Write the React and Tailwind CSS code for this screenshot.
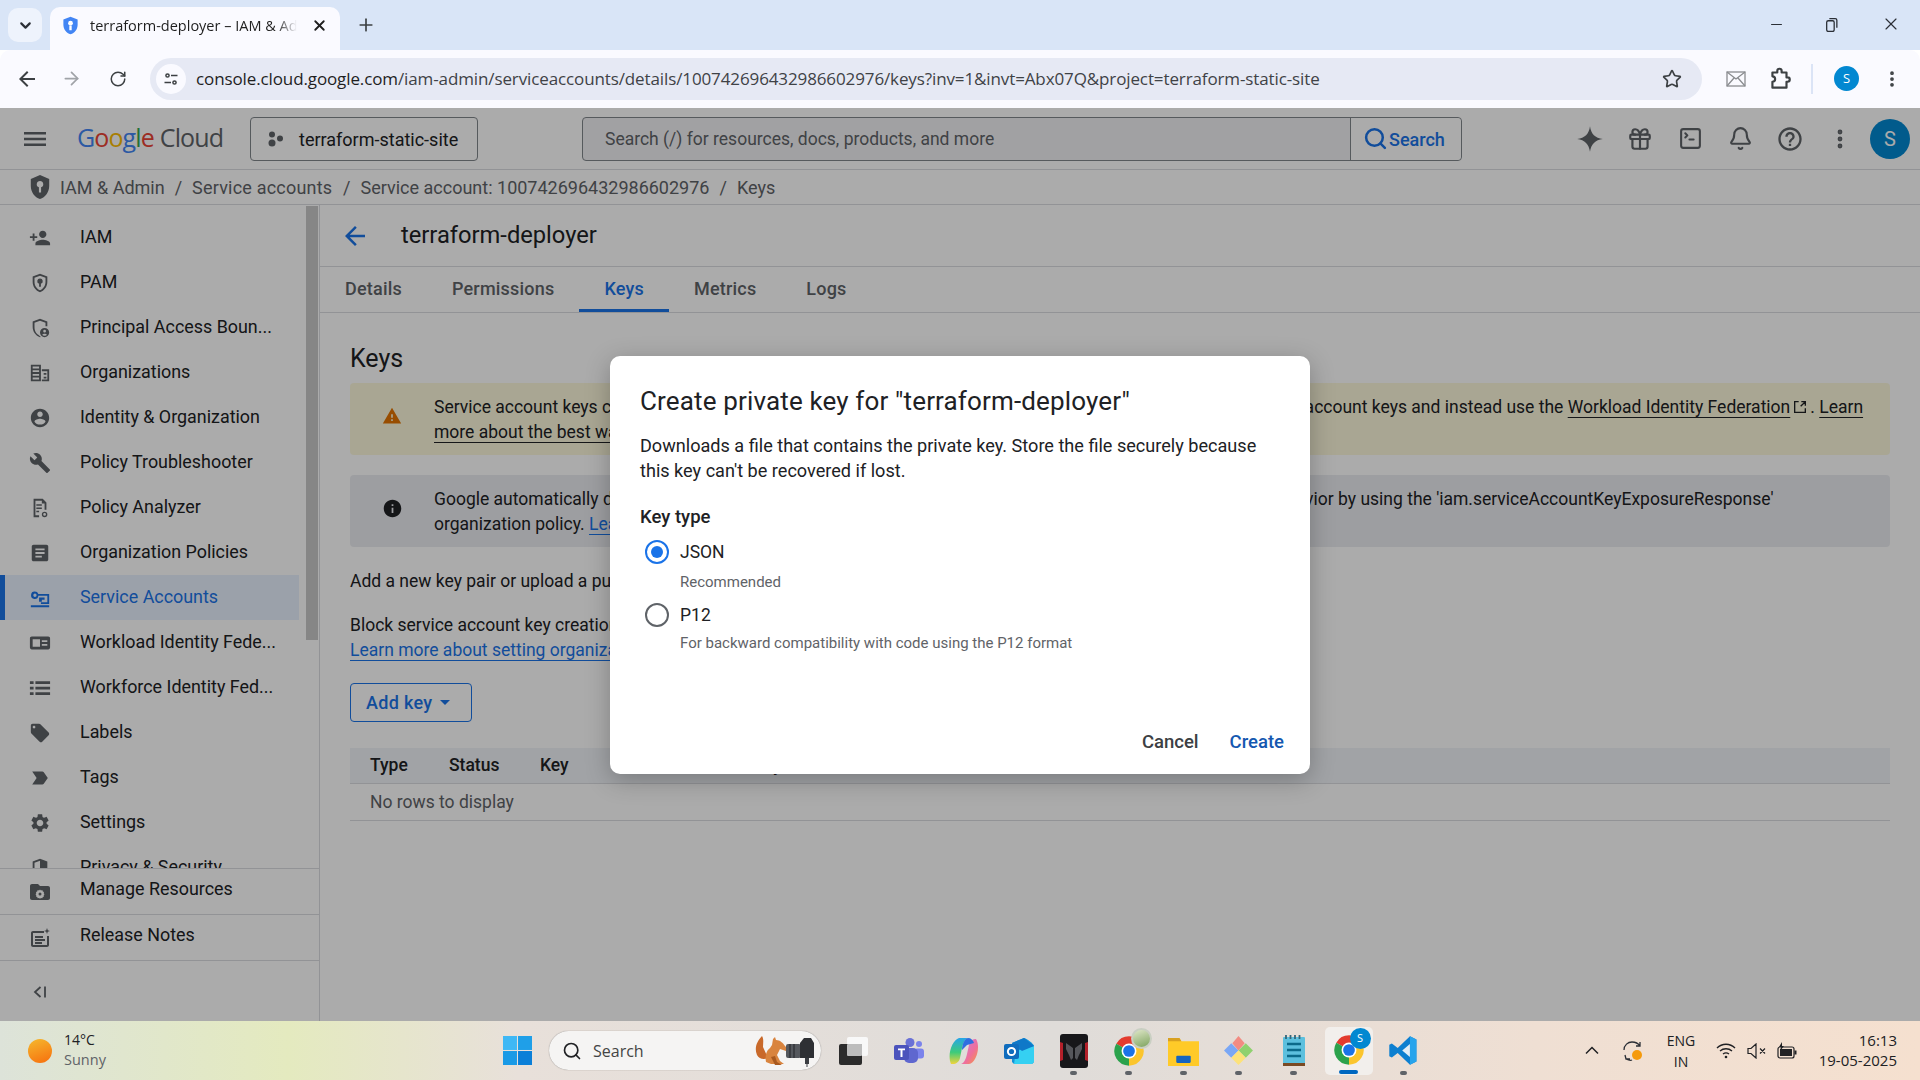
import { ArrowRight, RotateCw, Star, Minus, X, Plus, ChevronDown, EllipsisVertical, Search, SquareTerminal, Gift, Bell } from 'lucide-react';

// ─── Material icon paths ──────────────────────────────────────────────────────
const P = {
  personAdd: 'M15 12c2.21 0 4-1.79 4-4s-1.79-4-4-4-4 1.79-4 4 1.79 4 4 4zm-9-2V7H4v3H1v2h3v3h2v-3h3v-2H6zm9 4c-2.67 0-8 1.34-8 4v2h16v-2c0-2.66-5.33-4-8-4z',
  shieldKey: 'M12 2 4 5v6c0 5 3.4 9.7 8 11 4.6-1.3 8-6 8-11V5l-8-3zm6 9c0 4-2.6 7.8-6 8.9C8.600 18.800 6 15 6 11V6.400l6-2.200 6 2.200V11zM12 7a3 3 0 0 0-1 5.830V16h2v-3.170A3 3 0 0 0 12 7z',
  shieldPerson: 'M12 2 4 5v6c0 5 3.400 9.700 8 11l1-.3c-1-.6-1.800-1.300-2.400-2.200C7.900 18.900 6 15.100 6 11V6.400l6-2.200 6 2.200V10h2V5l-8-3zm5 10a5 5 0 1 0 0 10 5 5 0 0 0 0-10zm0 2a1.500 1.500 0 1 1 0 3 1.500 1.500 0 0 1 0-3zm0 6.500c-1 0-2-.5-2.500-1.200.5-.7 1.600-1 2.500-1s2 .3 2.500 1c-.5.700-1.500 1.200-2.500 1.200z',
  domain: 'M2 3h11v18H2V3zm2 2v2h7V5H4zm0 4v2h7V9H4zm0 4v2h7v-2H4zm0 4v2h7v-2H4zM14 8h8v13h-8v-2h6V10h-6V8zm2 4h3v2h-3v-2zm0 4h3v2h-3v-2z',
  account: 'M12 2C6.480 2 2 6.480 2 12s4.480 10 10 10 10-4.480 10-10S17.520 2 12 2zm0 3c1.660 0 3 1.340 3 3s-1.340 3-3 3-3-1.340-3-3 1.340-3 3-3zm0 14.200c-2.500 0-4.710-1.280-6-3.220.030-1.990 4-3.080 6-3.080 1.990 0 5.970 1.090 6 3.080-1.290 1.940-3.500 3.220-6 3.220z',
  build: 'M22.700 19l-9.100-9.100c.9-2.300.4-5-1.500-6.900-2-2-5-2.400-7.400-1.300L9 6 6 9 1.600 4.700C.4 7.100.9 10.100 2.900 12.100c1.900 1.900 4.600 2.400 6.900 1.500l9.100 9.100c.4.4 1 .4 1.400 0l2.300-2.300c.5-.4.5-1.100.1-1.400z',
  analyzer: 'M5 2h10l4 4v8h-2V7h-3V4H7v16h4v2H5V2zm3 6h6v1.500H8V8zm0 3.500h6V13H8v-1.500zm0 3.500h3v1.500H8V15zm9 1a3 3 0 1 0 0 6 3 3 0 0 0 0-6zm0 1.500a1.500 1.500 0 1 1 0 3 1.500 1.500 0 0 1 0-3z',
  article: 'M19 3H5c-1.100 0-2 .9-2 2v14c0 1.100.9 2 2 2h14c1.100 0 2-.9 2-2V5c0-1.100-.9-2-2-2zm-5 14H7v-2h7v2zm3-4H7v-2h10v2zm0-4H7V7h10v2z',
  serviceAcct: 'M2 20h20v2H2v-2zM6.500 5a4 4 0 0 1 3.700 2.500H22v11h-9v-2h7V9.500h-9.800A4 4 0 1 1 6.500 5zm0 2.200a1.800 1.800 0 1 0 0 3.600 1.800 1.800 0 0 0 0-3.600zM11 11.500h6V14h-3v2h-3v-4.500z',
  workload: 'M21 5H3c-1.100 0-2 .9-2 2v10c0 1.100.9 2 2 2h18c1.100 0 2-.9 2-2V7c0-1.100-.9-2-2-2zM4 8h8v8H4V8zm10 1h6v2h-6V9zm0 4h6v2h-6v-2z',
  list: 'M1 13.500h4v-3H1v3zm0 6h4v-3H1v3zm0-12h4v-3H1v3zm6 6h16v-3H7v3zm0 6h16v-3H7v3zm0-15v3h16v-3H7z',
  offer: 'M21.410 11.580l-9-9C12.050 2.220 11.550 2 11 2H4c-1.100 0-2 .9-2 2v7c0 .55.22 1.050.59 1.420l9 9c.36.36.86.58 1.410.58.55 0 1.050-.22 1.410-.59l7-7c.37-.36.59-.86.59-1.410 0-.55-.23-1.060-.59-1.420zM5.500 7C4.670 7 4 6.330 4 5.500S4.670 4 5.500 4 7 4.670 7 5.500 6.330 7 5.500 7z',
  tag: 'M3.500 18.990l11 .01c.67 0 1.270-.33 1.630-.84L20.500 12l-4.370-6.160c-.36-.51-.96-.84-1.630-.84l-11 .01L8.340 12 3.500 18.990z',
  settings: 'M19.140 12.940c.04-.3.06-.61.06-.94 0-.32-.02-.64-.07-.94l2.030-1.580c.18-.14.23-.41.12-.61l-1.920-3.320c-.12-.22-.37-.29-.59-.22l-2.390.96c-.5-.38-1.030-.7-1.620-.94l-.36-2.540c-.04-.24-.24-.41-.48-.41h-3.840c-.24 0-.43.17-.47.41l-.36 2.540c-.59.24-1.130.57-1.620.94l-2.390-.96c-.22-.08-.47 0-.59.22L2.740 8.870c-.12.21-.08.47.12.61l2.030 1.580c-.05.3-.09.63-.09.94s.02.64.07.94l-2.030 1.580c-.18.14-.23.41-.12.61l1.920 3.320c.12.22.37.29.59.22l2.390-.96c.5.38 1.030.7 1.620.94l.36 2.540c.05.24.24.41.48.41h3.840c.24 0 .44-.17.47-.41l.36-2.540c.59-.24 1.130-.56 1.620-.94l2.390.96c.22.08.47 0 .59-.22l1.920-3.320c.12-.22.07-.47-.12-.61l-2.010-1.580zM12 15.600c-1.980 0-3.600-1.620-3.600-3.600s1.620-3.600 3.600-3.600 3.600 1.620 3.600 3.600-1.620 3.600-3.600 3.600z',
  shieldLock: 'M12 2 4 5v6c0 5 3.400 9.700 8 11 4.600-1.300 8-6 8-11V5l-8-3zm0 2.200V20c-3.400-1.100-6-4.900-6-9V6.400l6-2.200z',
  folderGear: 'M20 6h-8l-2-2H4c-1.100 0-2 .9-2 2v12c0 1.100.9 2 2 2h16c1.100 0 2-.9 2-2V8c0-1.100-.9-2-2-2zm-8 3.500l1 .9 1.300-.3.5 1.300 1.200.5-.3 1.300.8 1-.8 1 .3 1.300-1.200.5-.5 1.200-1.300-.3-1 .9-1-.9-1.300.3-.5-1.200-1.200-.5.3-1.300-.8-1 .8-1-.3-1.300 1.200-.5.5-1.300 1.300.3 1-.9zm0 3a1.500 1.500 0 1 0 0 3 1.500 1.500 0 0 0 0-3z',
  notes: 'M5 5h11v2H5v12h14V10h2v9c0 1.100-.9 2-2 2H5c-1.100 0-2-.9-2-2V7c0-1.100.9-2 2-2zm2 5h8v2H7v-2zm0 3h10v2H7v-2zm0 3h7v2H7v-2zM19 2l.8 2.200L22 5l-2.200.8L19 8l-.8-2.200L16 5l2.200-.8L19 2z',
  warning: 'M1 21h22L12 2 1 21zm12-3h-2v-2h2v2zm0-4h-2v-4h2v4z',
  info: 'M12 2C6.480 2 2 6.480 2 12s4.480 10 10 10 10-4.480 10-10S17.520 2 12 2zm1 15h-2v-6h2v6zm0-8h-2V7h2v2z',
  help: 'M11 18h2v-2h-2v2zm1-16C6.480 2 2 6.480 2 12s4.480 10 10 10 10-4.480 10-10S17.520 2 12 2zm0 18c-4.410 0-8-3.590-8-8s3.590-8 8-8 8 3.590 8 8-3.590 8-8 8zm0-14c-2.210 0-4 1.790-4 4h2c0-1.100.9-2 2-2s2 .9 2 2c0 2-3 1.750-3 5h2c0-2.250 3-2.500 3-5 0-2.210-1.790-4-4-4z',
  spark: 'M12 1c.8 6.500 4.500 10.200 11 11-6.500.8-10.200 4.500-11 11-.8-6.500-4.500-10.200-11-11 6.500-.8 10.200-4.500 11-11z',
  arrowBack: 'M20 11H7.830l5.590-5.590L12 4l-8 8 8 8 1.410-1.410L7.830 13H20v-2z',
};

const Mi = ({ d, className }) => (
  <svg viewBox="0 0 24 24" fill="currentColor" className={className}>
    <path d={d} />
  </svg>
);

const NAV = [
  ['IAM', P.personAdd],
  ['PAM', P.shieldKey],
  ['Principal Access Boun...', P.shieldPerson],
  ['Organizations', P.domain],
  ['Identity & Organization', P.account],
  ['Policy Troubleshooter', P.build],
  ['Policy Analyzer', P.analyzer],
  ['Organization Policies', P.article],
  ['Service Accounts', P.serviceAcct, true],
  ['Workload Identity Fede...', P.workload],
  ['Workforce Identity Fed...', P.list],
  ['Labels', P.offer],
  ['Tags', P.tag],
  ['Settings', P.settings],
  ['Privacy & Security', P.shieldLock],
];

// ─── Taskbar drawings ─────────────────────────────────────────────────────────
const ChromeLogo = ({ className }) => (
  <svg viewBox="0 0 24 24" className={className}>
    <path d="M2.470 6.500A11 11 0 0 1 21.530 6.500L12 12Z" fill="#e33b2e" />
    <path d="M21.530 6.500A11 11 0 0 1 12 23L12 12Z" fill="#fbc52d" />
    <path d="M12 23A11 11 0 0 1 2.470 6.500L12 12Z" fill="#2ba24c" />
    <circle cx="12" cy="12" r="5.600" fill="#fff" />
    <circle cx="12" cy="12" r="4.400" fill="#1a73e8" />
  </svg>
);

const Dot = ({ on }) => <span className={`h-[4px] w-[7px] rounded-full ${on ? 'bg-[#5f6368]' : 'bg-transparent'}`} />;

const TaskSlot = ({ children, running }) => (
  <div className="flex h-[48px] w-[55px] flex-col items-center justify-end gap-[4px]">
    <div className="flex h-[32px] items-center justify-center">{children}</div>
    <Dot on={running} />
  </div>
);

const Tab = ({ children, active }) => (
  <div className={`flex h-[45px] items-center px-[25px] text-[18px] font-medium tracking-[0.200px] ${active ? 'border-b-[3px] border-[#1a73e8] pt-[1px] text-[#1a73e8]' : 'pb-[2px] text-[#5f6368]'}`}>
    {children}
  </div>
);

export default function App() {
  return (
    <div className="flex h-[1080px] w-[1920px] flex-col overflow-hidden bg-white font-['Roboto',sans-serif] text-[17.500px] text-[#202124]">
      {/* Browser tab strip */}
      <div className="flex h-[50px] shrink-0 items-end bg-[#d9e5f7] font-['Open_Sans',sans-serif]">
        <div className="mb-[8px] ml-[8px] flex h-[34px] w-[34px] items-center justify-center rounded-[10px] bg-[#eef3fc]">
          <ChevronDown size={17} strokeWidth={3} className="text-[#2b2f36]" />
        </div>
        <div className="ml-[8px] flex h-[43px] w-[290px] items-center rounded-t-[10px] bg-[#fafaff] pb-[6px] pl-[11px]">
          <svg viewBox="0 0 24 24" className="h-[19px] w-[19px]">
            <path d="M12 1 3 4.500V11c0 5.500 3.800 10.600 9 12 5.200-1.400 9-6.500 9-12V4.500L12 1z" fill="#4285f4" />
            <circle cx="12" cy="9" r="3" fill="#fff" />
            <path d="M12 12v6" stroke="#fff" strokeWidth="3" />
          </svg>
          <span className="ml-[10px] w-[207px] overflow-hidden whitespace-nowrap text-[14.500px] text-[#1f1f1f] [mask-image:linear-gradient(90deg,#000_90%,transparent)]">
            terraform-deployer – IAM & Admin
          </span>
          <X size={17} strokeWidth={2.600} className="ml-[14px] text-[#1f1f1f]" />
        </div>
        <Plus size={20} strokeWidth={2} className="mb-[15px] ml-[16px] text-[#3c4043]" />
        <div className="mb-[16px] ml-auto flex items-center text-[#2b2f36]">
          <Minus size={17} strokeWidth={1.600} className="mr-[39px]" />
          <svg viewBox="0 0 14 14" className="mr-[42px] h-[15px] w-[15px]" fill="none" stroke="currentColor" strokeWidth="1.200">
            <rect x="2.500" y="3.500" width="7" height="10" rx="1.500" />
            <path d="M5 1.500h5.500a1.500 1.500 0 0 1 1.500 1.500v7" />
          </svg>
          <X size={20} strokeWidth={1.400} className="mr-[19px]" />
        </div>
      </div>

      {/* Browser toolbar */}
      <div className="flex h-[58px] shrink-0 items-center rounded-t-[10px] bg-[#fafaff] pb-[1px] font-['Open_Sans',sans-serif] text-[#444746]">
        <Mi d={P.arrowBack} className="ml-[15px] h-[24px] w-[24px] text-[#3c4043]" />
        <ArrowRight size={21} className="ml-[22px] text-[#a0a3a8]" />
        <RotateCw size={18} className="ml-[27px] text-[#3c4043]" />
        <div className="ml-[23px] flex h-[42px] w-[1552px] items-center rounded-full bg-[#e6e9f4] pl-[6px]">
          <div className="flex h-[30px] w-[30px] items-center justify-center rounded-full bg-[#fafaff]">
            <svg viewBox="0 0 16 16" fill="none" stroke="#3c4043" strokeWidth="1.500" className="h-[16px] w-[16px]">
              <circle cx="4.500" cy="4.500" r="1.600" />
              <path d="M8 4.500h6.500M1.500 11.500H8" />
              <circle cx="11.500" cy="11.500" r="1.600" />
            </svg>
          </div>
          <span className="ml-[10px] whitespace-nowrap text-[17px] tracking-[-0.115px] text-[#1f1f1f]">
            console.cloud.google.com<span className="text-[#3f4246]">/iam-admin/serviceaccounts/details/100742696432986602976/keys?inv=1&invt=Abx07Q&project=terraform-static-site</span>
          </span>
          <Star size={20} strokeWidth={2} className="ml-auto mr-[20px] text-[#3c4043]" />
        </div>
        <svg viewBox="0 0 20 16" fill="none" stroke="#8a8c90" strokeWidth="1.300" className="ml-[24px] h-[16px] w-[20px]">
          <rect x="1" y="1" width="18" height="14" />
          <path d="M1 1l9 7 9-7M1 15l7-8M19 15l-7-8" />
        </svg>
        <svg viewBox="0 0 24 24" fill="none" stroke="#3c4043" strokeWidth="2" className="ml-[21px] h-[26px] w-[26px]">
          <path d="M5 6h4.500V4.500a2 2 0 0 1 4 0V6H18v4.500h1a2 2 0 0 1 0 4h-1V20H5v-5.500a2.500 2.500 0 0 0 0-5V6z" strokeLinejoin="round" />
        </svg>
        <div className="ml-[18px] h-[30px] w-[2px] bg-[#dbe4f6]" />
        <div className="ml-[21px] flex h-[25px] w-[25px] items-center justify-center rounded-full bg-[#0288d1] text-[13px] text-white">S</div>
        <EllipsisVertical size={20} strokeWidth={2.500} className="ml-[23px] text-[#3c4043]" />
      </div>

      {/* Cloud console */}
      <div className="relative flex min-h-0 flex-1 flex-col">
        {/* Console header */}
        <div className="flex h-[62px] shrink-0 items-center border-b border-[#dadce0] pl-[23px] text-[18px] text-[#5f6368]">
          <svg viewBox="0 0 24 24" fill="currentColor" className="h-[24px] w-[24px]">
            <path d="M1 5h22v2.400H1zM1 10.800h22v2.400H1zM1 16.600h22V19H1z" />
          </svg>
          <span className="ml-[30px] w-[173px] whitespace-nowrap pb-[2px] font-['Open_Sans',sans-serif] text-[25px] tracking-[-0.900px]">
            <span className="text-[#4285f4]">G</span>
            <span className="text-[#ea4335]">o</span>
            <span className="text-[#fbbc04]">o</span>
            <span className="text-[#4285f4]">g</span>
            <span className="text-[#34a853]">l</span>
            <span className="text-[#ea4335]">e</span>
            <span className="ml-[6px]">Cloud</span>
          </span>
          <div className="flex h-[44px] w-[228px] items-center rounded-[4px] border border-[#80868b] pl-[17px] text-[#202124]">
            <svg viewBox="0 0 16 16" fill="#5f6368" className="h-[16px] w-[16px]">
              <circle cx="4" cy="3.500" r="3" />
              <circle cx="12" cy="7.500" r="3" />
              <circle cx="4" cy="12" r="3.500" />
            </svg>
            <span className="ml-[15px] whitespace-nowrap pt-[2px]">terraform-static-site</span>
          </div>
          <div className="ml-[104px] flex h-[44px] w-[880px] items-center rounded-[4px] border border-[#80868b] bg-[#f1f1f3]">
            <span className="flex-1 pl-[22px] pt-[2px] text-[17.500px] text-[#5f6368]">Search (/) for resources, docs, products, and more</span>
            <div className="flex h-full w-[111px] items-center gap-[1px] rounded-r-[4px] border-l border-[#80868b] bg-white pl-[12px] font-medium text-[#1a73e8]">
              <Search size={25} strokeWidth={2.400} />
              <span className="pt-[1px]">Search</span>
            </div>
          </div>
          <Mi d={P.spark} className="ml-[114px] h-[28px] w-[28px]" />
          <Gift size={26} strokeWidth={2} className="ml-[23px]" />
          <SquareTerminal size={25} strokeWidth={2} className="ml-[25px]" />
          <Bell size={25} strokeWidth={2} className="ml-[25px]" />
          <Mi d={P.help} className="ml-[23px] h-[28px] w-[28px]" />
          <EllipsisVertical size={24} strokeWidth={2.800} className="ml-[24px]" />
          <div className="ml-[18px] flex h-[40px] w-[40px] items-center justify-center rounded-full bg-[#0288d1] text-[20px] text-white">S</div>
        </div>

        {/* Breadcrumbs */}
        <div className="flex h-[35px] shrink-0 items-center border-b border-[#dadce0] pl-[27px] text-[18px] text-[#5f6368]">
          <Mi d="M12 1 3.500 4.500V11c0 5.500 3.600 10.600 8.500 12 4.900-1.400 8.500-6.500 8.500-12V4.500L12 1zm0 5.500a3 3 0 0 1 1 5.830V17h-2v-4.670A3 3 0 0 1 12 6.500z" className="h-[26px] w-[26px]" />
          <span className="ml-[7px]">IAM & Admin</span>
          <span className="mx-[10px]">/</span>
          <span className="w-[141px] whitespace-nowrap tracking-[0.200px]">Service accounts</span>
          <span className="mx-[10px]">/</span>
          <span>Service account: 100742696432986602976</span>
          <span className="mx-[10px]">/</span>
          <span>Keys</span>
        </div>

        <div className="flex min-h-0 flex-1">
          {/* Sidebar */}
          <div className="flex w-[320px] shrink-0 flex-col border-r border-[#dadce0] text-[17.900px]">
            <div className="flex h-[663px] min-h-0">
              <div className="w-[299px] overflow-hidden pt-[10px]">
                {NAV.map(([label, d, active]) => (
                  <div
                    key={label}
                    className={`flex h-[45px] items-center whitespace-nowrap ${active ? 'border-l-[5px] border-[#1a73e8] bg-[#e8f0fe] pl-[24px] text-[#1a73e8]' : 'pl-[29px]'}`}
                  >
                    <Mi d={d} className={`h-[22px] w-[22px] ${active ? 'text-[#1a73e8]' : 'text-[#5f6368]'}`} />
                    <span className="ml-[29px]">{label}</span>
                  </div>
                ))}
              </div>
              <div className="ml-[7px] mt-[1px] h-[434px] w-[12px] bg-[#c8c8c8]" />
            </div>
            <div className="flex h-[46px] items-center border-t border-[#dadce0] pl-[28px]">
              <Mi d={P.folderGear} className="h-[24px] w-[24px] text-[#5f6368]" />
              <span className="ml-[28px] pb-[4px]">Manage Resources</span>
            </div>
            <div className="flex h-[46px] items-center border-t border-[#dadce0] pl-[28px]">
              <Mi d={P.notes} className="h-[24px] w-[24px] text-[#5f6368]" />
              <span className="ml-[28px] pb-[4px]">Release Notes</span>
            </div>
            <div className="flex flex-1 items-center border-t border-[#dadce0] pl-[33px] pt-[2px] text-[#5f6368]">
              <svg viewBox="0 0 14 14" fill="none" stroke="currentColor" strokeWidth="1.800" className="h-[14px] w-[14px]">
                <path d="M7.500 2 2 7l5.500 5M12 1.500v11" />
              </svg>
            </div>
          </div>

          {/* Page */}
          <div className="min-w-0 flex-1">
            <div className="flex h-[62px] items-center border-b border-[#dadce0] pl-[20px]">
              <Mi d={P.arrowBack} className="h-[30px] w-[30px] text-[#1a73e8]" />
              <span className="ml-[31px] text-[23.700px]">terraform-deployer</span>
            </div>
            <div className="flex h-[46px] border-b border-[#dadce0]">
              <Tab>Details</Tab>
              <Tab>Permissions</Tab>
              <Tab active>Keys</Tab>
              <Tab>Metrics</Tab>
              <Tab>Logs</Tab>
            </div>
            <div className="pl-[30px] pr-[30px]">
              <h1 className="mt-[31px] text-[25px] leading-[30px]">Keys</h1>
              <div className="mt-[9px] flex h-[72px] rounded-[4px] bg-[#fcf8dc]">
                <div className="flex w-[84px] shrink-0 items-center justify-center pb-[6px]">
                  <Mi d={P.warning} className="h-[20px] w-[20px] text-[#e37400]" />
                </div>
                <p className="py-[12px] pr-[24px] leading-[25px]">
                  Service account keys could pose a security risk if compromised. We recommend you avoid downloading service account keys and instead use the{' '}
                  <span className="underline underline-offset-4">Workload Identity Federation</span>
                  <svg viewBox="0 0 24 24" fill="none" stroke="currentColor" strokeWidth="2" className="mx-[2px] inline h-[16px] w-[16px] align-[-2px]">
                    <path d="M20 14v6H4V4h6M13 11l7-7M14 4h6v6" />
                  </svg>
                  . <span className="underline underline-offset-4">Learn more about the best way to authenticate service accounts on Google Cloud</span>.
                </p>
              </div>
              <div className="mt-[20px] flex h-[72px] rounded-[4px] bg-[#ebecf1]">
                <div className="flex w-[84px] shrink-0 items-center justify-center pb-[6px]">
                  <Mi d={P.info} className="h-[21px] w-[21px]" />
                </div>
                <p className="py-[12px] pr-[24px] leading-[25px]">
                  Google automatically disables service account keys detected in public repositories. You can customize this behavior by using the 'iam.serviceAccountKeyExposureResponse' organization policy.{' '}
                  <span className="text-[#1a73e8] underline underline-offset-4">Learn more</span>
                </p>
              </div>
              <p className="mt-[22px] leading-[25px]">Add a new key pair or upload a public key certificate from an existing key pair.</p>
              <p className="mt-[19px] leading-[25px]">Block service account key creation using organization policies.</p>
              <p className="leading-[25px] text-[#1a73e8] underline underline-offset-4">Learn more about setting organization policies for service accounts</p>
              <div className="mt-[20px] flex h-[39px] w-[122px] items-center rounded-[4px] border border-[#1a73e8] pl-[15px] text-[18px] font-medium tracking-[0.300px] text-[#1a73e8]">
                Add key
                <span className="ml-[8px] h-0 w-0 border-x-[5px] border-t-[5px] border-x-transparent border-t-[#1a73e8]" />
              </div>
              <div className="mt-[26px] flex h-[36px] items-center border-b border-[#dadce0] bg-[#f1f4f8] pl-[20px] font-medium">
                <span className="w-[79px]">Type</span>
                <span className="w-[91px]">Status</span>
                <span className="w-[213px]">Key</span>
                <span>Key creation date</span>
              </div>
              <div className="flex h-[37px] items-center border-b border-[#dadce0] pl-[20px] text-[#5f6368]">No rows to display</div>
            </div>
          </div>
        </div>

        {/* Scrim and dialog */}
        <div className="absolute inset-0 flex items-center justify-center bg-black/[0.33]">
          <div className="flex h-[418px] w-[700px] flex-col rounded-[10px] bg-white pl-[30px] pt-[30px] shadow-[0_6px_24px_rgba(0,0,0,0.25)]">
            <h2 className="whitespace-nowrap text-[26px] leading-[30px] tracking-[0.150px]">Create private key for "terraform-deployer"</h2>
            <p className="mt-[17px] w-[630px] text-[18.100px] leading-[25px]">
              Downloads a file that contains the private key. Store the file securely because this key can't be recovered if lost.
            </p>
            <div className="mt-[22px] text-[18.500px] font-medium leading-[25px]">Key type</div>
            <div className="ml-[5px] mt-[9px] flex h-[26px] items-center">
              <span className="flex h-[24px] w-[24px] items-center justify-center rounded-full border-2 border-[#1a73e8]">
                <span className="h-[12px] w-[12px] rounded-full bg-[#1a73e8]" />
              </span>
              <span className="ml-[11px] pt-[2px]">JSON</span>
            </div>
            <div className="ml-[40px] mt-[7px] text-[15px] leading-[20px] text-[#5f6368]">Recommended</div>
            <div className="ml-[5px] mt-[10px] flex h-[26px] items-center">
              <span className="h-[24px] w-[24px] rounded-full border-2 border-[#5f6368]" />
              <span className="ml-[11px] pt-[2px]">P12</span>
            </div>
            <div className="ml-[40px] mt-[5px] text-[15px] leading-[20px] text-[#5f6368]">For backward compatibility with code using the P12 format</div>
            <div className="mt-auto flex justify-end gap-[31px] pb-[19px] pr-[26px] text-[18.500px] font-medium leading-[25px]">
              <span className="text-[#3c4043]">Cancel</span>
              <span className="text-[#1558b0]">Create</span>
            </div>
          </div>
        </div>
      </div>

      {/* Windows taskbar */}
      <div className="flex h-[59px] shrink-0 items-center bg-[linear-gradient(90deg,#dde3d9_0%,#e4eabf_15%,#e8e0da_27%,#dfdcd9_55%,#efdfd3_80%,#f5e0cf_100%)] font-['Open_Sans',sans-serif]">
        <div className="ml-[28px] h-[24px] w-[24px] rounded-full bg-[linear-gradient(160deg,#f5b92e,#f76e0d)]" />
        <div className="ml-[12px] w-[439px] pb-[2px] text-[14px] leading-[20px]">
          <div className="text-[#202124]">14°C</div>
          <div className="text-[14.500px] text-[#5f6368]">Sunny</div>
        </div>
        <svg viewBox="0 0 28 28" className="h-[29px] w-[29px]">
          <rect x="0" y="0" width="13.500" height="13.500" fill="#3fb8f5" />
          <rect x="14.500" y="0" width="13.500" height="13.500" fill="#1f9fe8" />
          <rect x="0" y="14.500" width="13.500" height="13.500" fill="#1a9ae6" />
          <rect x="14.500" y="14.500" width="13.500" height="13.500" fill="#0b7fd8" />
        </svg>
        <div className="ml-[17px] flex h-[39px] w-[272px] items-center rounded-full bg-[#f5f4f3] pl-[13px] shadow-[0_0_1px_rgba(0,0,0,0.5)]">
          <Search size={20} strokeWidth={2} className="text-[#202124]" />
          <span className="ml-[11px] text-[16px] text-[#444]">Search</span>
          <svg viewBox="0 0 62 32" className="ml-auto mr-[5px] h-[32px] w-[62px]">
            <path d="M8 1c-5 5-8 12-5 19 2 4 7 5 11 3L9 12c0-4 1-8-1-11z" fill="#c9692a" />
            <path d="M19 4l2-2 1 3c4 0 7 3 9 6l3 3-2 2-6-2-3 6 3 6 4 3H17l-5-2c-1-6 0-11 4-14l2-3z" fill="#d9843e" />
            <path d="M17 22l4 8h7l-5-3-2-6z" fill="#a8591f" />
            <rect x="32" y="9" width="15" height="14" rx="2" fill="#55585d" />
            <path d="M36 9v14M40 9v14" stroke="#2a2c30" strokeWidth="1.200" />
            <path d="M46 8l4-5h7l3 5v15H46z" fill="#2e3034" />
            <rect x="51" y="23" width="4" height="6" fill="#3a3d42" />
            <path d="M53 29v3" stroke="#7a7d80" strokeWidth="1.500" />
          </svg>
        </div>
        <div className="ml-[5px] flex items-center">
          <TaskSlot>
            <svg viewBox="0 0 29 28" className="h-[28px] w-[29px]">
              <rect x="8" y="0" width="21" height="19" rx="2" fill="#f8f8f8" />
              <rect x="0" y="7" width="23" height="21" rx="2" fill="#2b2b2b" />
              <rect x="8" y="7" width="15" height="12" rx="1" fill="#bcbcbc" />
            </svg>
          </TaskSlot>
          <TaskSlot>
            <svg viewBox="0 0 30 26" className="h-[26px] w-[30px]">
              <circle cx="25" cy="6" r="3" fill="#7b83eb" />
              <rect x="20" y="10.500" width="10" height="10" rx="3" fill="#7b83eb" />
              <circle cx="16" cy="4.500" r="4.500" fill="#6a71d6" />
              <rect x="10" y="10" width="14" height="15" rx="5" fill="#5f67cf" />
              <rect x="0" y="7" width="15" height="15" rx="2" fill="#4b53bc" />
              <path d="M4 10.500h7v1.800H8.500V19h-2v-6.700H4z" fill="#fff" />
            </svg>
          </TaskSlot>
          <TaskSlot>
            <svg viewBox="0 0 30 28" className="h-[28px] w-[30px]">
              <defs>
                <linearGradient id="cpA" x1="0" y1="0" x2="0" y2="1">
                  <stop offset="0" stopColor="#27a5e8" />
                  <stop offset="0.550" stopColor="#3ecb7a" />
                  <stop offset="1" stopColor="#f0d43c" />
                </linearGradient>
                <linearGradient id="cpB" x1="0" y1="0" x2="1" y2="1">
                  <stop offset="0" stopColor="#c47de8" />
                  <stop offset="0.600" stopColor="#ef6f9a" />
                  <stop offset="1" stopColor="#f59a3c" />
                </linearGradient>
              </defs>
              <path d="M10 1h9c-3 1-5 5-6 10l-2 10c-1 4-4 6-7 6H2C-2 18 3 3 10 1z" fill="url(#cpA)" />
              <path d="M20 27h-8c3-1 5-5 6-10l2-9c1-4 3-6 6-6h1c5 8 0 24-7 25z" fill="url(#cpB)" />
              <path d="M19 1c3 0 5 2 6 5l-7 2-5 5c0-5 2-11 6-12z" fill="#2f6fe0" />
            </svg>
          </TaskSlot>
          <TaskSlot>
            <svg viewBox="0 0 30 26" className="h-[26px] w-[30px]">
              <path d="M8 5l12-5c2 0 10 6 10 8v16l-2 2H10L8 24z" fill="#1492d8" />
              <path d="M12 13l18-5v16l-2 2H10z" fill="#35d0f2" />
              <path d="M8 5l12-5 10 8-12 5z" fill="#0f78c8" />
              <rect x="0" y="6" width="15" height="15" rx="2" fill="#0f6cbd" />
              <circle cx="7.500" cy="13.500" r="3.600" fill="none" stroke="#fff" strokeWidth="2" />
            </svg>
          </TaskSlot>
          <TaskSlot running>
            <svg viewBox="0 0 28 34" className="h-[34px] w-[28px]">
              <rect width="28" height="34" rx="3" fill="#17171a" />
              <path d="M0 8l3 1v17l-3 1zM28 8l-3 1v17l3 1z" fill="#b3202a" />
              <path d="M6 9l7 5v10l-2 2-2-5-3-6zM22 9l-7 5v10l2 2 2-5 3-6z" fill="#55565b" />
            </svg>
          </TaskSlot>
          <TaskSlot running>
            <div className="relative h-[32px] w-[32px]">
              <ChromeLogo className="h-[32px] w-[32px]" />
              <div className="absolute -right-[7px] -top-[7px] h-[21px] w-[21px] rounded-full border-2 border-[#c9cfc2] bg-[linear-gradient(160deg,#dfe7c8,#7da35e)]" />
            </div>
          </TaskSlot>
          <TaskSlot running>
            <svg viewBox="0 0 30 30" className="h-[31px] w-[31px]">
              <path d="M0 3h11l2 3h17v24H0z" fill="#ffca28" />
              <path d="M0 3h11l2 3H0z" fill="#d8a020" />
              <rect x="8" y="20" width="14" height="7" rx="1" fill="#1565c0" />
            </svg>
          </TaskSlot>
          <TaskSlot running>
            <svg viewBox="0 0 30 30" className="h-[31px] w-[31px]">
              <path d="M8 8l7 7-7 7-7-7z" fill="#7aa7f5" />
              <path d="M15 1l6 7-6 7-6-7z" fill="#f28b82" />
              <path d="M22 8l7 7-7 7-7-7z" fill="#8fd16f" />
              <path d="M15 15l7 7-7 7-7-7z" fill="#fde27a" />
            </svg>
          </TaskSlot>
          <TaskSlot running>
            <svg viewBox="0 0 24 32" className="h-[32px] w-[24px]">
              <rect x="1" y="2" width="22" height="28" rx="1" fill="#5cc0de" />
              <rect x="1" y="28" width="22" height="3" fill="#7a4a24" />
              <path d="M5 9h14M5 15h14M5 21h14" stroke="#0b6a8a" strokeWidth="2.400" />
              <path d="M4 0v4M8.500 0v4M13 0v4M17.500 0v4" stroke="#33667a" strokeWidth="1.800" />
            </svg>
          </TaskSlot>
          <div className="flex h-[48px] w-[55px] items-center justify-center">
            <div className="flex h-[48px] w-[48px] flex-col items-center rounded-[5px] bg-[#f2efec] pt-[7px]">
              <div className="relative h-[32px] w-[32px]">
                <ChromeLogo className="h-[32px] w-[32px]" />
                <div className="absolute -right-[6px] -top-[6px] flex h-[21px] w-[21px] items-center justify-center rounded-full bg-[#0288d1] text-[11px] text-white">S</div>
              </div>
              <span className="mt-[4px] h-[4px] w-[19px] rounded-full bg-[#0067c0]" />
            </div>
          </div>
          <TaskSlot running>
            <svg viewBox="0 0 24 24" className="h-[31px] w-[31px]">
              <path d="M17 1 7.500 10 3 6.500 1 7.500v9l2 1 4.500-3.500L17 23l5-2.500v-17L17 1z" fill="#0d7fd0" />
              <path d="M17 7v10l-6-5 6-5z" fill="#fafafa" fillOpacity="0.900" />
              <path d="M17 1l5 2.500v17L17 23z" fill="#28a4ec" />
            </svg>
          </TaskSlot>
        </div>
        <svg viewBox="0 0 14 8" fill="none" stroke="#202124" strokeWidth="1.500" className="ml-[154px] h-[9px] w-[14px]">
          <path d="M1 7l6-6 6 6" />
        </svg>
        <svg viewBox="0 0 22 22" fill="none" stroke="#2b2f36" strokeWidth="1.300" className="ml-[23px] h-[24px] w-[22px]">
          <path d="M2 10c0-5 4-8 8-8 3 0 6 1 8 4M18 2v4h-4M3 15l1 4h4M4 19c2 1 4 2 6 1" />
          <circle cx="15" cy="15" r="5" fill="#f59a0c" stroke="none" />
        </svg>
        <div className="ml-[17px] w-[40px] text-center text-[14px] leading-[21px] text-[#202124]">
          <div>ENG</div>
          <div>IN</div>
        </div>
        <svg viewBox="0 0 20 16" fill="none" stroke="#202124" strokeWidth="1.400" className="ml-[15px] h-[16px] w-[20px]">
          <path d="M1 5c5-5 13-5 18 0M4 8c3.500-3 8.500-3 12 0M7 11c2-1.500 4-1.500 6 0" />
          <circle cx="10" cy="14" r="1.300" fill="#202124" stroke="none" />
        </svg>
        <svg viewBox="0 0 20 16" fill="none" stroke="#202124" strokeWidth="1.200" className="ml-[11px] h-[16px] w-[20px]">
          <path d="M1 5.500h3L9 1v14l-5-4.500H1zM13 5.500l5 5M18 5.500l-5 5" />
        </svg>
        <svg viewBox="0 0 20 18" className="ml-[10px] h-[18px] w-[20px]">
          <rect x="1" y="5" width="16" height="11" rx="2" fill="none" stroke="#202124" strokeWidth="1.200" />
          <rect x="3" y="7" width="12" height="7" fill="#202124" />
          <rect x="17.500" y="8.500" width="2" height="4" fill="#202124" />
          <path d="M5 0 2 5h2L3 9l4-5H5z" fill="#202124" />
        </svg>
        <div className="ml-auto pb-[2px] pr-[23px] text-right text-[15px] leading-[20px] text-[#202124]">
          <div>16:13</div>
          <div>19-05-2025</div>
        </div>
      </div>
    </div>
  );
}
